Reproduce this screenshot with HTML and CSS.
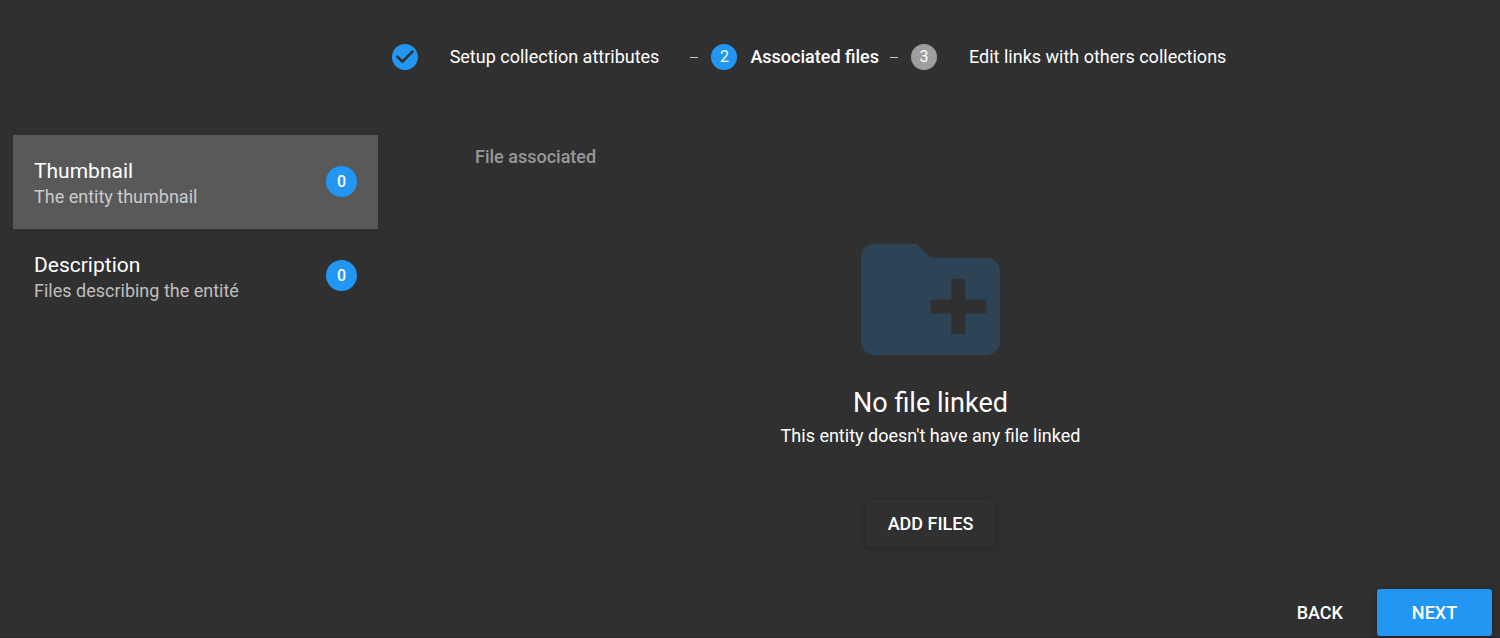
FILE: index.html
```html
<!DOCTYPE html>
<html lang="en">
<head>
<meta charset="utf-8">
<meta name="viewport" content="width=device-width, initial-scale=1">
<title>Associated files</title>
<link rel="stylesheet" href="styles.css">
</head>
<body>
<div class="page">
  <ol class="stepper">
    <li class="step">
      <svg class="step-check" viewBox="2 2 20 20" aria-hidden="true"><path d="M12 2C6.500 2 2 6.500 2 12s4.500 10 10 10 10-4.500 10-10S17.500 2 12 2zm-2 15l-5-5 1.410-1.410L10 14.170l7.590-7.590L19 8l-9 9z"/></svg>
      <span class="step-label">Setup collection attributes</span>
    </li>
    <li class="step step-active">
      <span class="step-number">2</span>
      <span class="step-label">Associated files</span>
    </li>
    <li class="step">
      <span class="step-number step-number-pending">3</span>
      <span class="step-label">Edit links with others collections</span>
    </li>
  </ol>

  <main class="content">
    <nav class="categories" aria-label="File categories">
      <button type="button" class="category category-selected">
        <span class="category-text">
          <span class="category-title">Thumbnail</span>
          <span class="category-detail">The entity thumbnail</span>
        </span>
        <span class="badge">0</span>
      </button>
      <button type="button" class="category">
        <span class="category-text">
          <span class="category-title">Description</span>
          <span class="category-detail">Files describing the entité</span>
        </span>
        <span class="badge">0</span>
      </button>
    </nav>

    <section class="files">
      <h2 class="files-heading">File associated</h2>
      <div class="empty">
        <svg class="empty-icon" viewBox="0 0 24 24" aria-hidden="true"><path d="M20 6h-8l-2-2H4c-1.110 0-1.990.890-1.990 2L2 18c0 1.110.890 2 2 2h16c1.110 0 2-.890 2-2V8c0-1.110-.890-2-2-2zm0 8h-3v3h-2v-3h-3v-2h3V9h2v3h3v2z"/></svg>
        <h3 class="empty-title">No file linked</h3>
        <p class="empty-detail">This entity doesn't have any file linked</p>
        <button type="button" class="button button-raised">Add files</button>
      </div>
    </section>
  </main>

  <footer class="actions">
    <button type="button" class="button">Back</button>
    <button type="button" class="button button-primary">Next</button>
  </footer>
</div>
</body>
</html>
```
FILE: styles.css
```css
* {
  box-sizing: border-box;
}

body {
  margin: 0;
  background: #303030;
  color: #fff;
  font-family: Roboto, sans-serif;
  font-size: 18px;
  line-height: 26px;
}

button {
  border: 0;
  background: none;
  color: inherit;
  font: inherit;
  cursor: pointer;
}

.page {
  display: flex;
  flex-direction: column;
  min-height: 100vh;
  padding-bottom: 1px;
  border-bottom: 1px solid #2b262b;
}

.stepper {
  display: flex;
  justify-content: center;
  margin: 0;
  padding: 44px 0 65px 118px;
  list-style: none;
}

.step {
  display: flex;
  align-items: center;
  gap: 32px;
}

.step-active {
  gap: 13px;
  font-weight: 500;
}

.step + .step::before {
  content: "";
  width: 8px;
  height: 1px;
  background: #c4c4c4;
}

.step-active::before {
  margin-left: 31px;
}

.step:last-child::before {
  margin: 0 -19px 0 11px;
}

.step-check,
.step-number {
  width: 26px;
  height: 26px;
}

.step-check {
  fill: #2196f3;
}

.step-number {
  border-radius: 50%;
  background: #2196f3;
  font-size: 16px;
  font-weight: 400;
  text-align: center;
}

.step-number-pending {
  background: #9e9e9e;
}

.content {
  display: flex;
  flex: 1;
  padding: 0 17px 0 13px;
}

.categories {
  flex: 0 0 25%;
  max-width: 365px;
}

.category {
  display: flex;
  align-items: center;
  justify-content: space-between;
  width: 100%;
  padding: 18px 21px 19px;
  text-align: left;
}

.category-selected {
  background: #595959;
}

.category-text {
  padding-top: 5px;
}

.category-title,
.category-detail {
  display: block;
}

.category-title {
  font-size: 21px;
}

.category-detail {
  color: rgba(255, 255, 255, 0.7);
}

.badge {
  width: 31px;
  border-radius: 50%;
  background: #2196f3;
  font-size: 16px;
  font-weight: 500;
  line-height: 31px;
  text-align: center;
}

.files {
  flex: 1;
}

.files-heading {
  margin: 0;
  padding: 9px 0 0 97px;
  color: #989898;
  font-size: 18px;
  font-weight: 500;
}

.empty {
  display: flex;
  flex-direction: column;
  align-items: center;
  padding-top: 46px;
}

.empty-icon {
  width: 167px;
  height: 167px;
  fill: #2d4356;
}

.empty-title {
  margin: 0;
  font-size: 27px;
  font-weight: 400;
  line-height: 40px;
}

.empty-detail {
  margin: 0 0 51px;
}

.button {
  height: 47px;
  padding: 0 22px;
  border-radius: 3px;
  font-weight: 500;
  text-transform: uppercase;
}

.button-raised {
  box-shadow: 0 1px 6px rgba(0, 0, 0, 0.3);
}

.button-primary {
  width: 115px;
  background: #2196f3;
  box-shadow: 0 1px 6px rgba(0, 0, 0, 0.3);
}

.actions {
  display: flex;
  justify-content: flex-end;
  gap: 12px;
  padding-right: 8px;
}
```
